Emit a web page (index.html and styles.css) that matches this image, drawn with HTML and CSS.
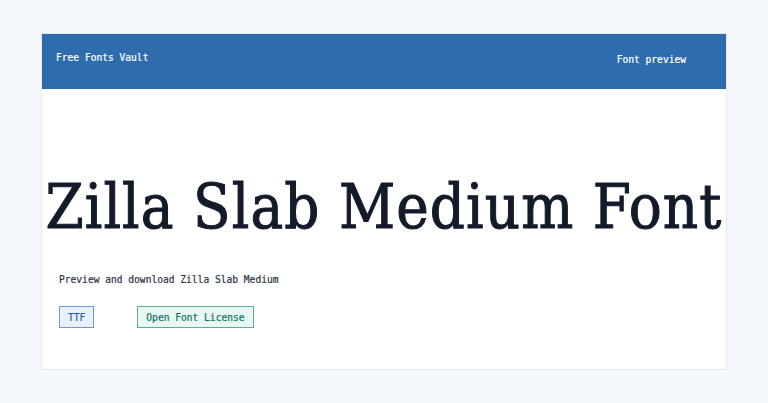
FILE: index.html
```html
<!DOCTYPE html>
<html lang="en">
<head>
<meta charset="utf-8">
<title>Zilla Slab Medium Font</title>
<link rel="stylesheet" href="styles.css">
</head>
<body>
<div class="card">
  <header class="topbar">
    <span class="brand">Free Fonts Vault</span>
    <span class="nav">Font preview</span>
  </header>
  <main class="content">
    <h1 class="title">Zilla Slab Medium Font</h1>
    <p class="desc">Preview and download Zilla Slab Medium</p>
    <div class="badges">
      <span class="badge badge-format">TTF</span>
      <span class="badge badge-license">Open Font License</span>
    </div>
  </main>
</div>
</body>
</html>
```

FILE: styles.css
```css
html, body {
  margin: 0;
  padding: 0;
}

body {
  background: #f5f9fe;
  padding: 33px 41px;
  font-family: "DejaVu Sans Mono", "Liberation Mono", monospace;
}

.card {
  background: #ffffff;
  border: 1px solid #e2e8f0;
  height: 337px;
  box-sizing: border-box;
  display: flex;
  flex-direction: column;
}

.topbar {
  background: #2f6cad;
  height: 55px;
  flex: none;
  display: flex;
  align-items: center;
  justify-content: space-between;
  padding: 0 40px 0 14px;
  color: #ffffff;
  font-size: 9.6px;
  -webkit-text-stroke: 0.2px #ffffff;
}

.brand {
  margin-top: -8px;
}

.nav {
  margin-top: -4px;
}

.content {
  padding: 0 17px;
  display: flex;
  flex-direction: column;
}

.title {
  margin: 78px -17px 0;
  text-align: center;
  font-family: "DejaVu Serif Condensed", "DejaVu Serif", serif;
  font-stretch: semi-condensed;
  font-weight: normal;
  font-size: 61px;
  line-height: 80px;
  letter-spacing: 1.1px;
  color: #131b2b;
  -webkit-text-stroke: 1px #131b2b;
  white-space: nowrap;
}

.desc {
  margin: 26px 0 0;
  font-size: 9.6px;
  line-height: 14px;
  color: #2a3446;
  -webkit-text-stroke: 0.2px #2a3446;
}

.badges {
  display: flex;
  gap: 43px;
  margin-top: 19px;
}

.badge {
  height: 22px;
  box-sizing: border-box;
  display: inline-flex;
  align-items: center;
  padding: 0 8px;
  font-size: 9.6px;
  border: 1px solid;
}

.badge-format {
  background: #e7f0fc;
  border-color: #6b9ad4;
  color: #2b5d9c;
  -webkit-text-stroke: 0.2px #2b5d9c;
}

.badge-license {
  background: #e7f7f2;
  border-color: #62a89b;
  color: #16705f;
  -webkit-text-stroke: 0.2px #16705f;
}
```
